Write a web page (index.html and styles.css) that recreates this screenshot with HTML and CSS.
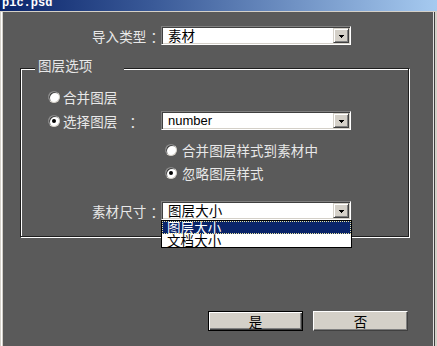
FILE: index.html
```html
<!DOCTYPE html>
<html lang="zh-CN">
<head>
<meta charset="utf-8">
<title>pic.psd</title>
<link rel="stylesheet" href="styles.css">
</head>
<body>
<div class="window">
  <div class="titlebar"><span class="title">pic.psd</span></div>
  <div class="client">
    <div class="row row-import">
      <span class="label">导入类型<span class="label-colon">：</span></span>
      <div class="select">
        <span class="value">素材</span>
        <span class="drop"><svg width="5" height="3" viewBox="0 0 5 3" shape-rendering="crispEdges"><rect x="0" y="0" width="5" height="1" fill="#000"/><rect x="1" y="1" width="3" height="1" fill="#000"/><rect x="2" y="2" width="1" height="1" fill="#000"/></svg></span>
      </div>
    </div>

    <div class="group">
      <div class="legend">图层选项</div>

      <div class="opt opt-merge">
        <span class="radio"></span><span class="opt-text">合并图层</span>
      </div>

      <div class="opt opt-select">
        <div class="opt-label">
          <span class="radio checked"></span><span class="opt-text">选择图层</span><span class="colon">：</span>
        </div>
        <div class="select">
          <span class="value latin">number</span>
          <span class="drop"><svg width="5" height="3" viewBox="0 0 5 3" shape-rendering="crispEdges"><rect x="0" y="0" width="5" height="1" fill="#000"/><rect x="1" y="1" width="3" height="1" fill="#000"/><rect x="2" y="2" width="1" height="1" fill="#000"/></svg></span>
        </div>
      </div>

      <div class="opt sub sub-merge">
        <span class="radio"></span><span class="sub-text">合并图层样式到素材中</span>
      </div>

      <div class="opt sub sub-ignore">
        <span class="radio checked"></span><span class="sub-text">忽略图层样式</span>
      </div>

      <div class="row row-size">
        <span class="label label-size">素材尺寸<span class="label-colon">：</span></span>
        <div class="select-wrap">
          <div class="select">
            <span class="value">图层大小</span>
            <span class="drop"><svg width="5" height="3" viewBox="0 0 5 3" shape-rendering="crispEdges"><rect x="0" y="0" width="5" height="1" fill="#000"/><rect x="1" y="1" width="3" height="1" fill="#000"/><rect x="2" y="2" width="1" height="1" fill="#000"/></svg></span>
          </div>
          <ul class="dropdown">
            <li class="item selected">图层大小</li>
            <li class="item">文档大小</li>
          </ul>
        </div>
      </div>
    </div>

    <div class="buttons">
      <button class="btn btn-default">是</button>
      <button class="btn">否</button>
    </div>
  </div>
</div>
</body>
</html>
```

FILE: styles.css
```css
* {
  box-sizing: border-box;
}

html, body {
  margin: 0;
  padding: 0;
  background: #5a5a5a;
}

body {
  font-family: "Noto Sans CJK SC", "Liberation Sans", sans-serif;
  font-size: 13.5px;
  letter-spacing: 0.1px;
  color: #e8e8e8;
}

.window {
  width: 437px;
  height: 346px;
  overflow: hidden;
  display: flex;
  flex-direction: column;
}

.titlebar {
  height: 12px;
  flex: none;
  background: linear-gradient(to right, #0a246a 0%, #3a5a98 35%, #a6caf0 100%);
  border-bottom: 1px solid #d4d0c8;
  overflow: hidden;
  padding-left: 2px;
}

.title {
  display: block;
  font-family: "Liberation Mono", "DejaVu Sans Mono", monospace;
  font-weight: bold;
  font-size: 12px;
  letter-spacing: 0;
  line-height: 12px;
  margin-top: -3px;
  color: #fff;
}

.client {
  flex: 1;
  background: #5a5a5a;
  padding-top: 14px;
  box-shadow:
    inset 1px 0 0 #d4d0c8,
    inset 2px 0 0 #ffffff,
    inset 3px 0 0 #d4d0c8,
    inset -1px 0 0 #d4d0c8,
    inset -2px 0 0 #d4d0c8,
    inset -3px 0 0 #404040,
    inset -4px 0 0 #e0e0e0;
  display: flex;
  flex-direction: column;
}

.row {
  display: flex;
  align-items: center;
  height: 19px;
}

.label {
  width: 158px;
  text-align: right;
  line-height: 14px;
  white-space: nowrap;
  padding-right: 1px;
}

.label-colon {
  margin-left: 4px;
  margin-right: -7px;
}

.label-size {
  width: 137px;
}

.select {
  margin-left: 3px;
  width: 190px;
  height: 19px;
  display: flex;
  align-items: stretch;
  background: #fff;
  border: 1px solid;
  border-color: #808080 #ffffff #ffffff #808080;
  box-shadow: inset 1px 1px 0 #404040, inset -1px -1px 0 #d4d0c8;
  padding: 1px;
  color: #000;
}

.select .value {
  flex: 1;
  padding-left: 5px;
  line-height: 15px;
  white-space: nowrap;
}

.select .value.latin {
  font-family: "Liberation Sans", sans-serif;
  letter-spacing: 0;
  font-size: 13px;
}

.drop {
  width: 16px;
  height: 15px;
  background: #d4d0c8;
  border: 1px solid;
  border-color: #d4d0c8 #404040 #404040 #d4d0c8;
  box-shadow: inset 1px 1px 0 #ffffff, inset -1px -1px 0 #808080;
  display: flex;
  align-items: center;
  justify-content: center;
  padding-top: 1px;
}

.drop svg {
  display: block;
}

.group {
  margin-top: 23px;
  margin-left: 20px;
  width: 389px;
  height: 169px;
  flex: none;
  border: 1px solid #1e1e1e;
  box-shadow: inset 1px 1px 0 #ffffff, 1px 1px 0 #ffffff;
  display: flex;
  flex-direction: column;
}

.legend {
  align-self: flex-start;
  margin-top: -11px;
  margin-left: 14px;
  padding: 0 32px 0 3px;
  background: #5a5a5a;
  line-height: 14px;
  height: 14px;
}

.opt {
  display: flex;
  align-items: center;
  line-height: 14px;
  height: 14px;
}

.opt-merge {
  margin-top: 18px;
  margin-left: 27px;
}

.opt-select {
  margin-top: 7px;
  margin-left: 27px;
  height: 19px;
}

.opt-label {
  width: 110px;
  display: flex;
  align-items: center;
}

.opt-text {
  margin-left: 3px;
}

.colon {
  margin-left: 12px;
}

.sub {
  margin-left: 144px;
}

.sub-text {
  margin-left: 5px;
}

.sub-merge {
  margin-top: 13px;
}

.sub-ignore {
  margin-top: 9px;
}

.radio {
  flex: none;
  width: 12px;
  height: 12px;
  border-radius: 50%;
  background: #fff;
  border: 1px solid;
  border-color: #808080 #d4d0c8 #d4d0c8 #808080;
  box-shadow: inset 1px 1px 0 #404040;
  display: flex;
  align-items: center;
  justify-content: center;
}

.radio.checked::after {
  content: "";
  width: 4px;
  height: 4px;
  border-radius: 50%;
  background: #000;
}

.row-size {
  margin-top: 21px;
}

.select-wrap {
  position: relative;
}

.dropdown {
  position: absolute;
  left: 3px;
  top: 19px;
  width: 191px;
  margin: 0;
  padding: 0;
  list-style: none;
  background: #fff;
  border: 1px solid #000;
  color: #000;
  z-index: 2;
}

.item {
  height: 13px;
  line-height: 13px;
  padding-left: 5px;
  white-space: nowrap;
}

.item.selected {
  background: #0a246a;
  color: #fff;
  outline: 1px dotted #e8e4a0;
  outline-offset: -1px;
}

.buttons {
  margin-top: 74px;
  display: flex;
  justify-content: flex-end;
  gap: 10px;
  padding-right: 29px;
}

.btn {
  width: 95px;
  height: 20px;
  margin: 0;
  padding: 0;
  font-family: "Noto Sans CJK SC", sans-serif;
  font-size: 13.5px;
  line-height: 16px;
  color: #000;
  background: #d4d0c8;
  border: 1px solid;
  border-color: #ffffff #404040 #404040 #ffffff;
  box-shadow: inset -1px -1px 0 #808080;
}

.btn-default {
  border-color: #000;
  box-shadow: inset 1px 1px 0 #ffffff, inset -1px -1px 0 #404040, inset -2px -2px 0 #808080;
}
```
